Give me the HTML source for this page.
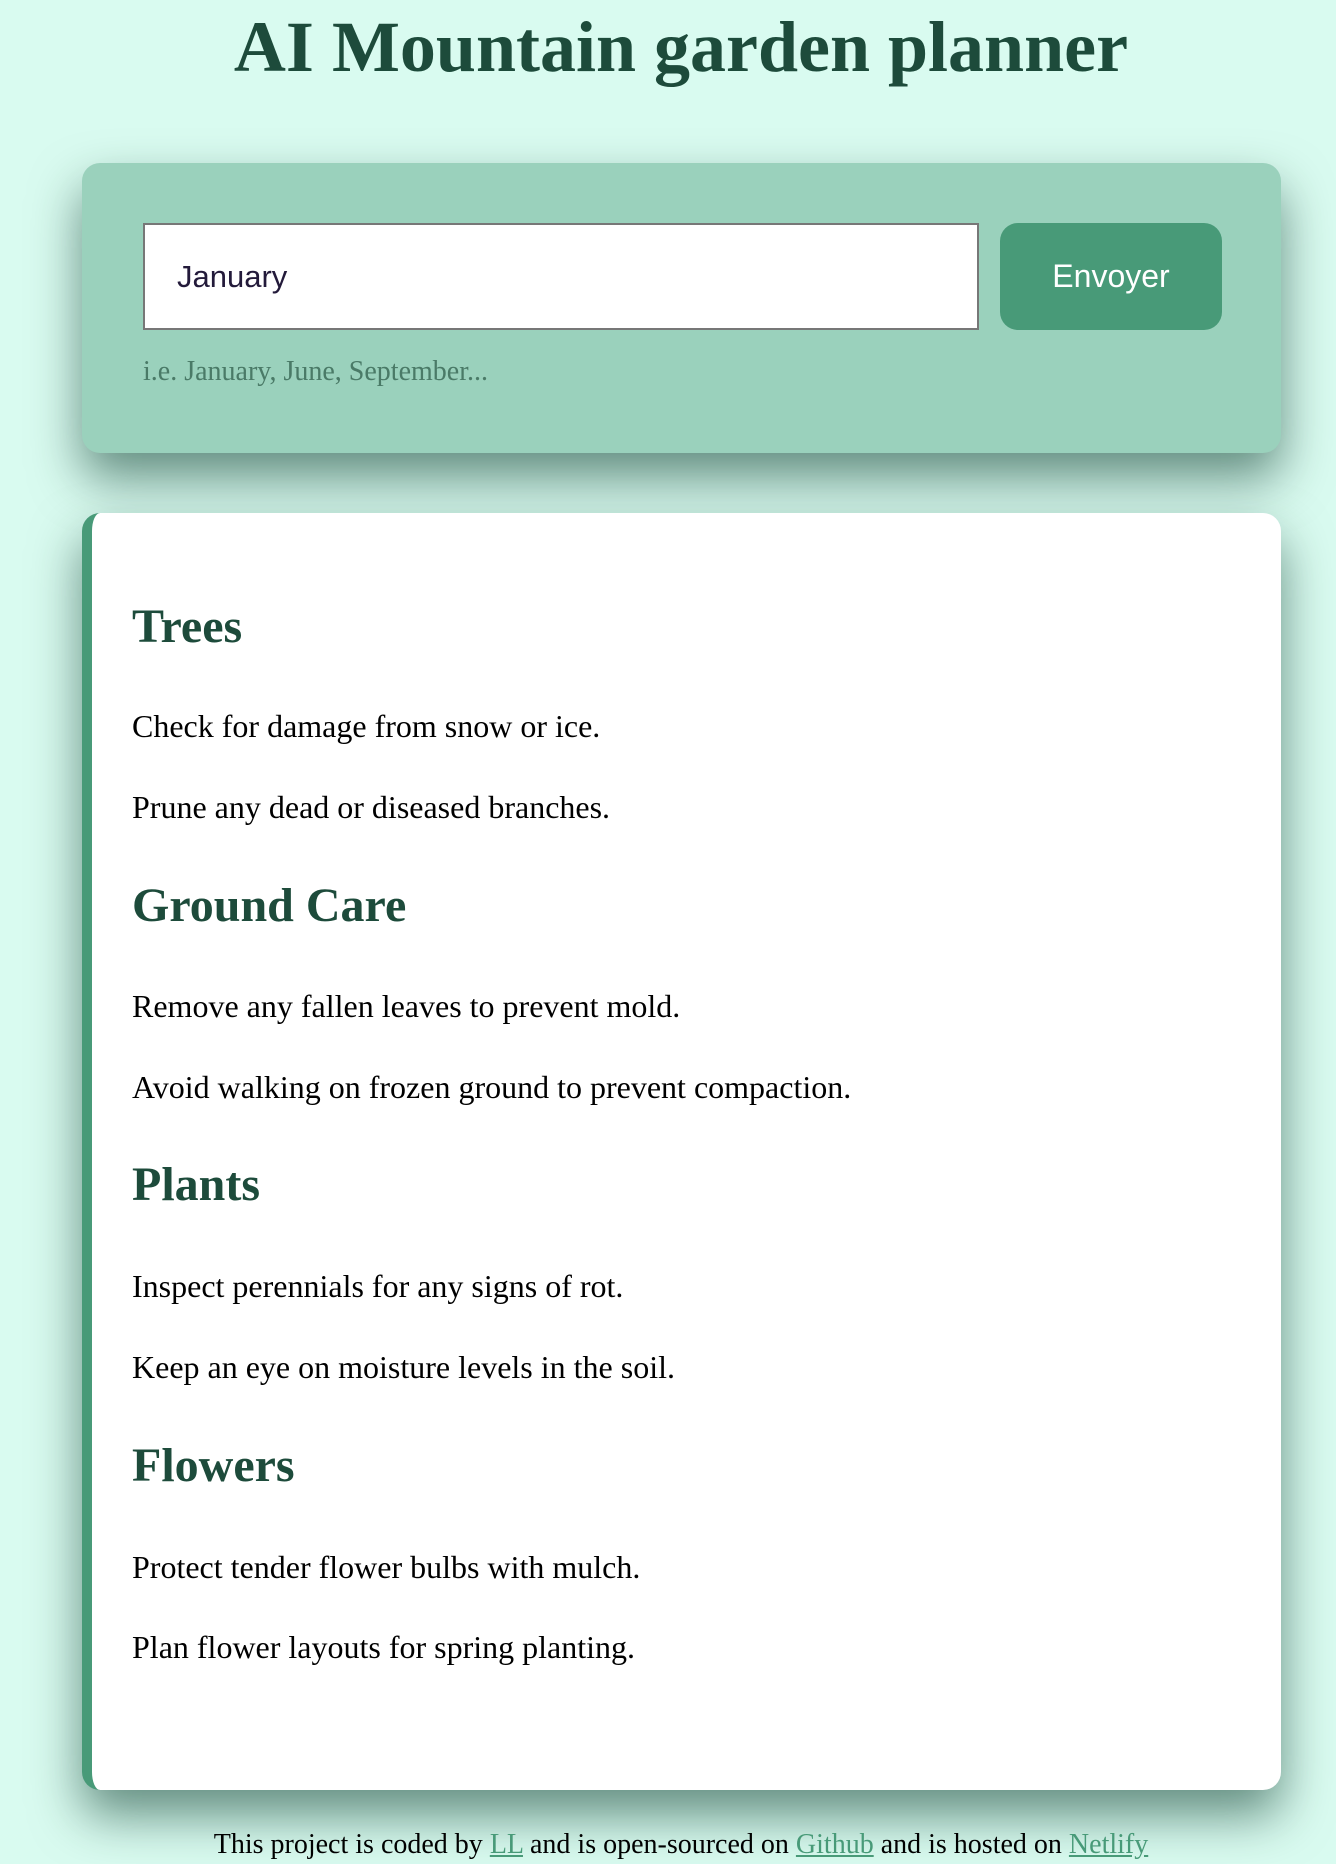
<!DOCTYPE html>
<html><head><style>
body{margin:0;width:1336px;height:1864px;background:#d9fbf0;font-family:"Liberation Serif",serif;position:relative;overflow:hidden}
.a{position:absolute;white-space:nowrap}
h1{position:absolute;top:-1px;left:13px;width:1336px;text-align:center;margin:0;font-size:72px;line-height:96px;color:#1d4b3b;font-weight:bold}
.form{position:absolute;left:82px;top:163px;width:1199px;height:290px;background:#9ad1bc;border-radius:18px;box-shadow:0 25px 50px rgba(0,50,35,.55)}
.inp{position:absolute;left:143px;top:223px;background:#fff;border:2px solid #777;font-family:"Liberation Sans",sans-serif;font-size:31px;color:#231a3a;line-height:103px;padding-left:32px;box-sizing:border-box;width:836px;height:107px}
.btn{position:absolute;left:1000px;top:223px;width:222px;height:107px;background:#489a78;border-radius:18px;color:#fff;font-family:"Liberation Sans",sans-serif;font-size:32px;text-align:center;line-height:107px}
.res{position:absolute;left:82px;top:513px;width:1199px;height:1277px;background:#fff;border-radius:18px;border-left:10px solid #489a78;box-sizing:border-box;box-shadow:0 25px 50px rgba(0,50,35,.55)}
.h{font-size:48px;font-weight:bold;color:#1d4b3b;left:132px}
.p{font-size:32px;color:#000;left:132px}
a{color:#489a78}
</style></head><body>
<h1>AI Mountain garden planner</h1>
<div class="form"></div>
<div class="inp">January</div>
<div class="btn">Envoyer</div>
<div class="a" style="left:143px;top:356px;font-size:28px;color:#4a7a67">i.e. January, June, September...</div>
<div class="res"></div>
<div class="a h" style="top:599px">Trees</div>
<div class="a p" style="top:708px">Check for damage from snow or ice.</div>
<div class="a p" style="top:789px">Prune any dead or diseased branches.</div>
<div class="a h" style="top:878px">Ground Care</div>
<div class="a p" style="top:988px">Remove any fallen leaves to prevent mold.</div>
<div class="a p" style="top:1069px">Avoid walking on frozen ground to prevent compaction.</div>
<div class="a h" style="top:1157px">Plants</div>
<div class="a p" style="top:1268px">Inspect perennials for any signs of rot.</div>
<div class="a p" style="top:1349px">Keep an eye on moisture levels in the soil.</div>
<div class="a h" style="top:1438px">Flowers</div>
<div class="a p" style="top:1549px">Protect tender flower bulbs with mulch.</div>
<div class="a p" style="top:1629px">Plan flower layouts for spring planting.</div>
<div class="a" style="left:13px;width:1336px;text-align:center;top:1829px;font-size:28px">This project is coded by <a href="#">LL</a> and is open-sourced on <a href="#">Github</a> and is hosted on <a href="#">Netlify</a></div>
</body></html>
